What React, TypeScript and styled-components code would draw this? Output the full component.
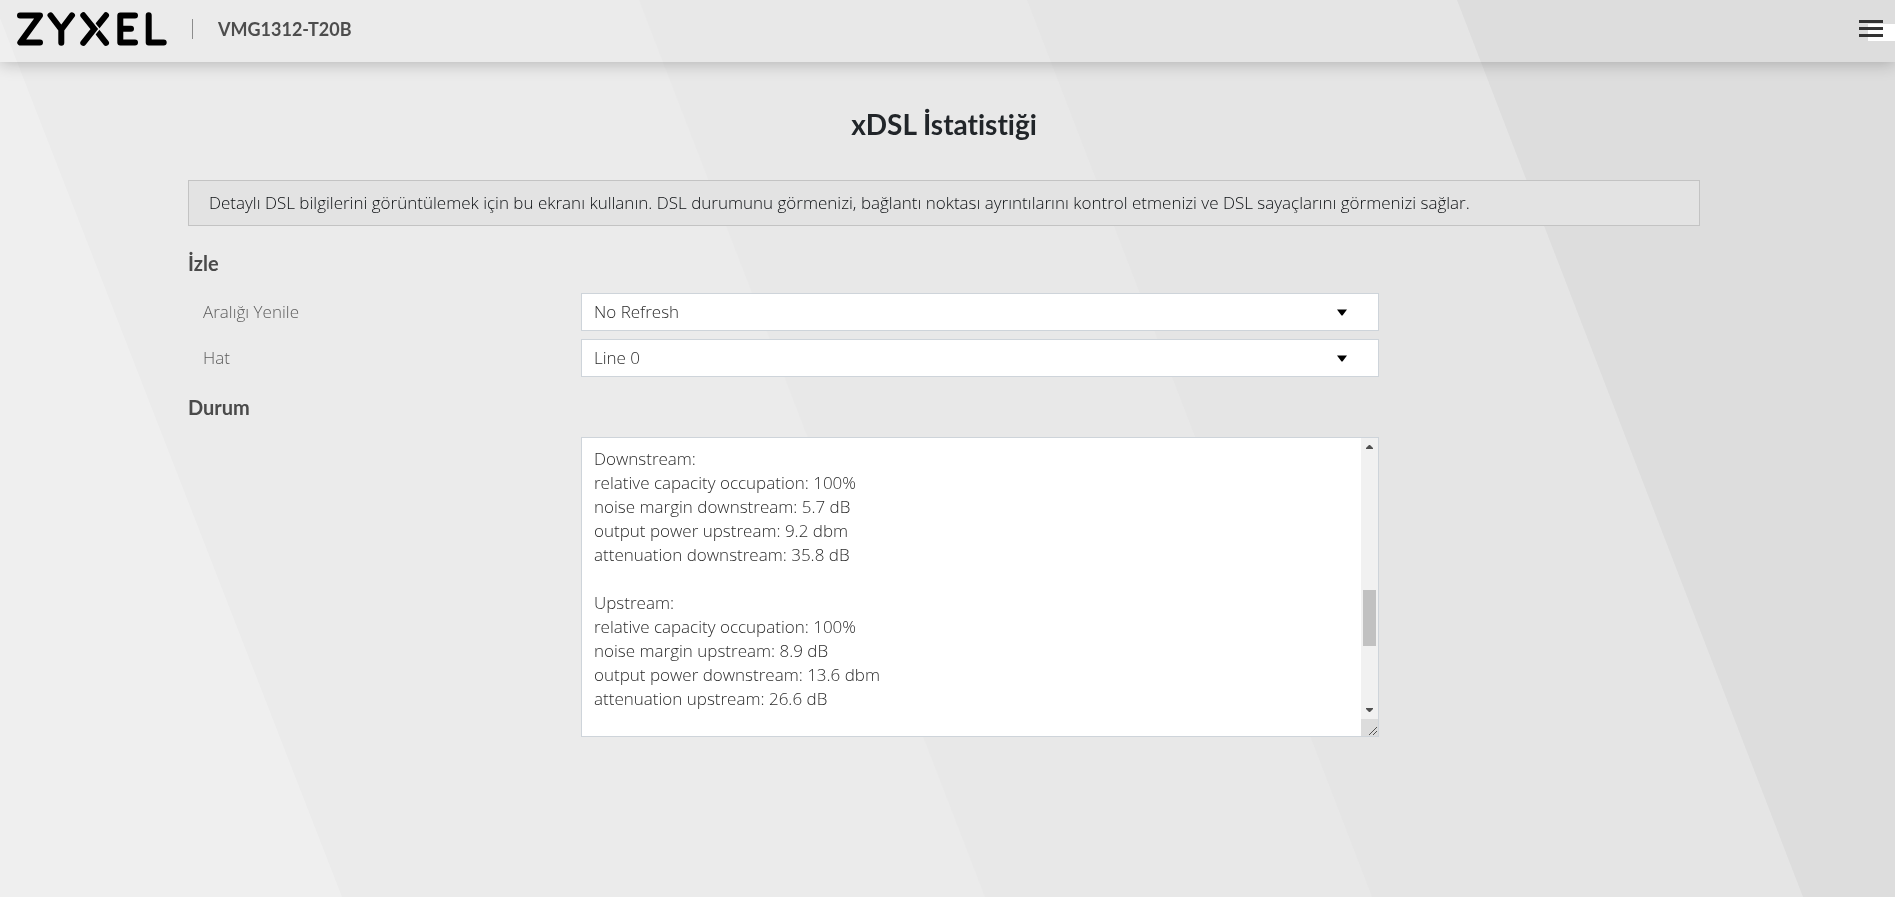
import React from "react";
import styled, { createGlobalStyle } from "styled-components";

const GlobalStyle = createGlobalStyle`
  *, *::before, *::after { box-sizing: border-box; }
  body {
    margin: 0;
    background: #ebebeb;
    color: #0c0f12;
    font: 300 17px/24px "Open Sans", sans-serif;
    overflow-x: hidden;
  }
`;

const headingFont = `
  margin: 0;
  font-family: Lato, sans-serif;
  font-weight: 700;
  font-variant-ligatures: none;
`;

const Backdrop = styled.svg`
  position: fixed;
  inset: 0;
  width: 100%;
  height: 100%;
  z-index: -1;
`;

const Header = styled.header`
  display: flex;
  align-items: center;
  height: 62px;
  padding: 0 12px 5px 16px;
  box-shadow: 0 1px 16px rgba(0, 0, 0, 0.25);
  clip-path: inset(0 0 -24px 0);
`;

const Logo = styled.svg`
  width: 152px;
  height: 36px;
`;

const Model = styled.h1`
  ${headingFont}
  margin-left: 24px;
  padding-left: 26px;
  color: #4d4d4d;
  font-size: 18px;
  line-height: 20px;
  background: linear-gradient(#8c8c8c, #8c8c8c) left / 1px 100% no-repeat;
`;

const MenuButton = styled.button`
  position: relative;
  margin-left: auto;
  padding: 0;
  width: 24px;
  height: 17px;
  border: 0;
  background: none;
  cursor: pointer;

  &::before {
    content: "";
    position: absolute;
    left: 9px;
    top: 4px;
    width: 27px;
    height: 17px;
    background: #fff;
  }

  svg {
    position: relative;
    display: block;
  }
`;

const Main = styled.main`
  padding: 45px 195px 40px 188px;
`;

const Title = styled.h2`
  ${headingFont}
  color: #212529;
  font-size: 28px;
  line-height: 34px;
  text-align: center;
`;

const Intro = styled.p`
  margin: 39px 0 0;
  padding: 10px 20px;
  border: 1px solid #c3c3c3;
  background: #e3e3e3;
`;

const SectionTitle = styled.h3`
  ${headingFont}
  color: #4a4a4a;
  font-size: 20px;
  line-height: 24px;
`;

const Section = styled.section<{ $gap: number }>`
  margin-top: ${(p) => p.$gap}px;
`;

const Row = styled.div<{ $gap: number }>`
  display: grid;
  grid-template-columns: 393fr 798fr 321fr;
  align-items: center;
  margin-top: ${(p) => p.$gap}px;
`;

const Label = styled.label`
  padding-left: 15px;
  color: #5c5c5c;
`;

const SelectWrap = styled.div`
  position: relative;

  svg {
    position: absolute;
    right: 32px;
    top: 16px;
    pointer-events: none;
  }
`;

const Select = styled.select`
  display: block;
  width: 100%;
  height: 38px;
  padding: 0 12px;
  border: 1px solid #ced4da;
  border-radius: 0;
  background: #fff;
  color: #2b2b2b;
  font: inherit;
  appearance: none;
`;

const StatusFrame = styled.div`
  grid-column: 2;
  display: flex;
  height: 300px;
  border: 1px solid #ced4da;
  background: #fff;
`;

const StatusText = styled.textarea`
  flex: 1;
  padding: 9px 12px;
  border: 0;
  background: none;
  color: #2b2b2b;
  font: inherit;
  resize: none;
  outline: 0;
  scrollbar-width: none;
`;

const ScrollColumn = styled.div`
  display: flex;
  flex-direction: column;
  width: 17px;
  background: #f1f1f1;
`;

const Arrow = styled.svg`
  display: block;
  width: 17px;
  height: 17px;
  fill: #505050;
`;

const Track = styled.div`
  flex: 1;
  padding: 135px 2px 0;
`;

const Thumb = styled.div`
  height: 56px;
  background: #c1c1c1;
`;

const Grip = styled.svg`
  display: block;
  width: 17px;
  height: 17px;
  background: #dcdcdc;
`;

const status = `Downstream:
relative capacity occupation: 100%
noise margin downstream: 5.7 dB
output power upstream: 9.2 dbm
attenuation downstream: 35.8 dB

Upstream:
relative capacity occupation: 100%
noise margin upstream: 8.9 dB
output power downstream: 13.6 dbm
attenuation upstream: 26.6 dB
`;

function SelectField({ id, label, option, gap }: { id: string; label: string; option: string; gap: number }) {
  return (
    <Row $gap={gap}>
      <Label htmlFor={id}>{label}</Label>
      <SelectWrap>
        <Select id={id}>
          <option>{option}</option>
        </Select>
        <svg width="10" height="7" viewBox="0 0 10 7" aria-hidden="true">
          <path d="M0 0.5H10L5.5 6.5H4.5Z" fill="#000" />
        </svg>
      </SelectWrap>
    </Row>
  );
}

export default function App() {
  return (
    <>
      <GlobalStyle />
      <Backdrop viewBox="0 0 1895 897" preserveAspectRatio="none" aria-hidden="true">
        <path d="M0 0H1895V897H0Z" fill="#efefef" />
        <path d="M-7 0H1895V897H342Z" fill="#ebebeb" />
        <path d="M639 0H1895V897H985Z" fill="#e8e8e8" />
        <path d="M1027 0H1895V897H1372Z" fill="#e5e5e5" />
        <path d="M1457 0H1895V897H1803Z" fill="#dddddd" />
      </Backdrop>
      <Header>
        <Logo viewBox="16 11 152 36" role="img" aria-label="ZYXEL">
          <g fill="none" stroke="#000" strokeWidth="6" strokeLinecap="round" strokeLinejoin="round">
            <path d="M20 15.5H40L20.3 42.5H40" />
            <path d="M50.5 15.3L61.3 29.5L72 15.3M61.3 29.5V42.8" />
            <path d="M106 15.3L97 26.5M106 42.8L97 31.5" />
            <path d="M135 15.5H120.3V42.5H135M120.3 28.8H131" />
            <path d="M148.7 15.3V42.5H163.7" />
          </g>
          <path d="M83.3 15.3L94.3 29L83.3 42.8" fill="none" stroke="#ebebeb" strokeWidth="9" />
          <path
            d="M83.3 15.3L94.3 29L83.3 42.8"
            fill="none"
            stroke="#000"
            strokeWidth="6"
            strokeLinecap="round"
            strokeLinejoin="miter"
          />
        </Logo>
        <Model>VMG1312-T20B</Model>
        <MenuButton type="button" aria-label="Menu">
          <svg width="24" height="17" viewBox="0 0 24 17" aria-hidden="true">
            <path d="M0 0H24V3H0ZM0 7H24V10H0ZM0 14H24V17H0Z" fill="#333" />
          </svg>
        </MenuButton>
      </Header>
      <Main>
        <Title>xDSL İstatistiği</Title>
        <Intro>
          Detaylı DSL bilgilerini görüntülemek için bu ekranı kullanın. DSL durumunu görmenizi, bağlantı noktası
          ayrıntılarını kontrol etmenizi ve DSL sayaçlarını görmenizi sağlar.
        </Intro>
        <Section $gap={25}>
          <SectionTitle>İzle</SectionTitle>
          <SelectField id="interval" label="Aralığı Yenile" option="No Refresh" gap={18} />
          <SelectField id="line" label="Hat" option="Line 0" gap={8} />
        </Section>
        <Section $gap={18}>
          <SectionTitle id="status-title">Durum</SectionTitle>
          <Row $gap={18}>
            <StatusFrame>
              <StatusText aria-labelledby="status-title" readOnly defaultValue={status} />
              <ScrollColumn aria-hidden="true">
                <Arrow viewBox="0 0 17 17">
                  <path d="M5 11H12V10L9 7H8L5 10Z" />
                </Arrow>
                <Track>
                  <Thumb />
                </Track>
                <Arrow viewBox="0 0 17 17">
                  <path d="M5 6H12V7L9 10H8L5 7Z" />
                </Arrow>
                <Grip viewBox="0 0 17 17">
                  <path d="M8 16L16 8M12 16L16 12" stroke="#505050" fill="none" />
                </Grip>
              </ScrollColumn>
            </StatusFrame>
          </Row>
        </Section>
      </Main>
    </>
  );
}
